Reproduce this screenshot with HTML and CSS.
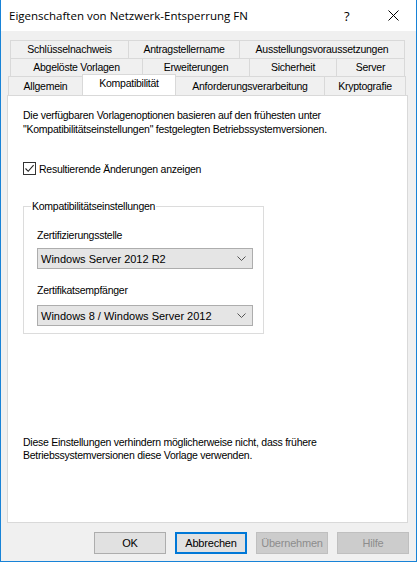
FILE: index.html
```html
<!DOCTYPE html>
<html lang="de">
<head>
<meta charset="utf-8">
<title>Eigenschaften von Netzwerk-Entsperrung FN</title>
<link rel="stylesheet" href="styles.css">
</head>
<body>
<div class="window">
  <div class="titlebar">
    <span class="title">Eigenschaften von Netzwerk-Entsperrung FN</span>
    <span class="help">?</span>
    <span class="close"><svg width="11" height="11" viewBox="0 0 11 11"><path d="M0.5 0.5 L10.5 10.5 M10.5 0.5 L0.5 10.5" stroke="#000" stroke-width="1" fill="none"/></svg></span>
  </div>

  <div class="tabs">
    <div class="tabrow row1">
      <div class="tab w118">Schlüsselnachweis</div>
      <div class="tab w111">Antragstellername</div>
      <div class="tab w166">Ausstellungsvoraussetzungen</div>
    </div>
    <div class="tabrow row2">
      <div class="tab w132">Abgelöste Vorlagen</div>
      <div class="tab w107">Erweiterungen</div>
      <div class="tab w87">Sicherheit</div>
      <div class="tab w69">Server</div>
    </div>
    <div class="tabrow row3">
      <div class="tab w74">Allgemein</div>
      <div class="tab active w93">Kompatibilität</div>
      <div class="tab w148">Anforderungsverarbeitung</div>
      <div class="tab w82">Kryptografie</div>
    </div>
  </div>

  <div class="panel">
    <p class="intro">Die verfügbaren Vorlagenoptionen basieren auf den frühesten unter<br>"Kompatibilitätseinstellungen" festgelegten Betriebssystemversionen.</p>

    <label class="check">
      <span class="box"><svg width="11" height="11" viewBox="0 0 11 11"><path d="M1.5 5.5 L4.2 8.3 L9.6 2.2" stroke="#222" stroke-width="1.1" fill="none"/></svg></span>
      <span>Resultierende Änderungen anzeigen</span>
    </label>

    <fieldset class="group">
      <legend>Kompatibilitätseinstellungen</legend>
      <div class="field-label">Zertifizierungsstelle</div>
      <div class="combo">
        <span>Windows Server 2012 R2</span>
        <svg class="chev" width="9" height="5" viewBox="0 0 9 5"><path d="M0.5 0.5 L4.5 4.5 L8.5 0.5" stroke="#555" stroke-width="1" fill="none"/></svg>
      </div>
      <div class="field-label second">Zertifikatsempfänger</div>
      <div class="combo second">
        <span>Windows 8 / Windows Server 2012</span>
        <svg class="chev" width="9" height="5" viewBox="0 0 9 5"><path d="M0.5 0.5 L4.5 4.5 L8.5 0.5" stroke="#555" stroke-width="1" fill="none"/></svg>
      </div>
    </fieldset>

    <p class="note">Diese Einstellungen verhindern möglicherweise nicht, dass frühere<br>Betriebssystemversionen diese Vorlage verwenden.</p>
  </div>

  <div class="buttons">
    <button class="btn">OK</button>
    <button class="btn default">Abbrechen</button>
    <button class="btn disabled">Übernehmen</button>
    <button class="btn disabled">Hilfe</button>
  </div>
</div>
</body>
</html>
```
FILE: styles.css
```css
html, body {
  margin: 0;
  padding: 0;
  background: #ffffff;
}

.window {
  width: 417px;
  height: 562px;
  box-sizing: border-box;
  border: 1px solid #1883d7;
  border-top: none;
  background: #f0f0f0;
  font-family: "Liberation Sans", Arial, sans-serif;
  font-size: 10.5px;
  letter-spacing: -0.25px;
  color: #000;
  overflow: hidden;
}

.titlebar {
  height: 31px;
  background: #ffffff;
  display: flex;
  align-items: center;
  padding-left: 8px;
  font-family: "Open Sans", "Noto Sans", sans-serif;
  font-size: 11.5px;
  letter-spacing: 0;
}

.title {
  flex: 1;
  margin-top: -1px;
}

.help {
  font-size: 13px;
  width: 12px;
  margin-right: 32px;
}

.close {
  display: flex;
  margin-right: 17px;
}

.tabs {
  margin-top: 9px;
}

.tabrow {
  display: flex;
  height: 18px;
}

.row1, .row2 {
  padding-left: 9px;
}

.row3 {
  padding-left: 7px;
  height: 19px;
  position: relative;
  z-index: 1;
}

.tab {
  box-sizing: border-box;
  flex: none;
  border: 1px solid #d9d9d9;
  border-right: none;
  border-bottom: none;
  background: #f0f0f0;
  display: flex;
  align-items: center;
  justify-content: center;
  line-height: 13px;
}

.tab:last-child {
  border-right: 1px solid #d9d9d9;
}

.tab.active {
  background: #ffffff;
  margin-top: -2px;
  height: 21px;
  align-items: flex-start;
  padding-top: 2px;
  border-right: 1px solid #d9d9d9;
}

.tab.active + .tab {
  border-left: none;
}

.w118 { width: 118px; }
.w111 { width: 111px; }
.w166 { width: 166px; }
.w132 { width: 132px; }
.w107 { width: 107px; }
.w87 { width: 87px; }
.w69 { width: 69px; }
.w74 { width: 74px; }
.w93 { width: 94px; }
.w148 { width: 148px; }
.w82 { width: 82px; }

.panel {
  margin-left: 6px;
  width: 401px;
  height: 428px;
  box-sizing: border-box;
  border: 1px solid #d9d9d9;
  background: #ffffff;
  padding: 0 14px;
  display: flex;
  flex-direction: column;
}

.intro {
  margin: 12px 0 0 1px;
  line-height: 14px;
}

.check {
  display: flex;
  align-items: center;
  margin-top: 26px;
  margin-left: 1px;
  height: 13px;
}

.box {
  width: 13px;
  height: 13px;
  box-sizing: border-box;
  border: 1px solid #333333;
  display: flex;
  align-items: center;
  justify-content: center;
  margin-right: 3px;
  background: #fff;
}

.group {
  margin: 25px 0 0 1px;
  width: 241px;
  height: 134px;
  box-sizing: border-box;
  border: 1px solid #dcdcdc;
  padding: 0 0 0 13px;
}

.group legend {
  padding: 0 1px;
  margin-left: -6px;
  line-height: 13px;
}

.field-label {
  margin-top: 16px;
  line-height: 13px;
}

.field-label.second {
  margin-top: 15px;
}

.combo {
  margin-top: 6px;
  width: 216px;
  height: 21px;
  box-sizing: border-box;
  border: 1px solid #adadad;
  background: #e5e5e5;
  display: flex;
  align-items: center;
  justify-content: space-between;
  padding: 0 6px 0 3px;
  font-size: 11px;
  letter-spacing: 0;
}

.combo.second {
  margin-top: 8px;
}

.chev {
  display: block;
}

.note {
  margin: auto 0 60px 1px;
  line-height: 13px;
}

.buttons {
  display: flex;
  justify-content: flex-end;
  gap: 9px;
  padding-right: 7px;
  margin-top: 9px;
}

.btn {
  width: 72px;
  height: 22px;
  box-sizing: border-box;
  border: 1px solid #adadad;
  background: #e1e1e1;
  font-family: "Liberation Sans", Arial, sans-serif;
  font-size: 11px;
  letter-spacing: -0.2px;
  color: #000;
  padding: 0;
  margin: 0;
}

.btn.default {
  border: 2px solid #0078d7;
}

.btn.disabled {
  background: #cccccc;
  border-color: #bfbfbf;
  color: #8d8d8d;
}
```
